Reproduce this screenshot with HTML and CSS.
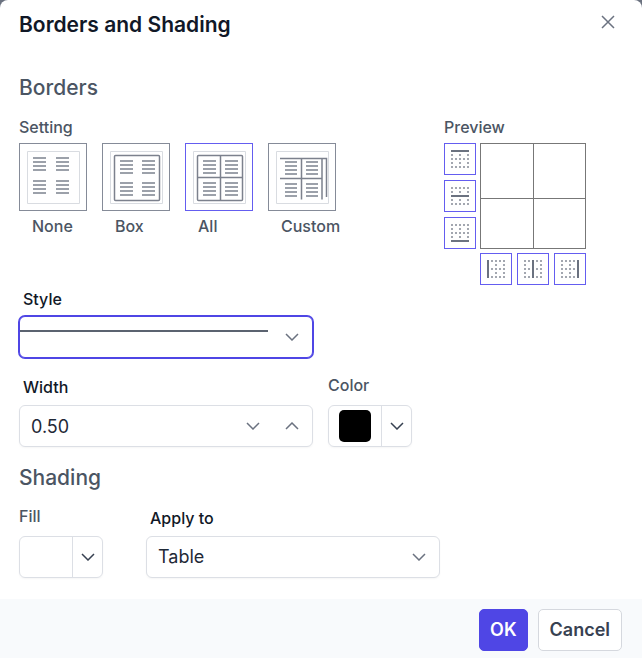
FILE: index.html
```html
<!DOCTYPE html>
<html lang="en">
<head>
<meta charset="utf-8">
<meta name="viewport" content="width=device-width, initial-scale=1">
<title>Borders and Shading</title>
<link rel="stylesheet" href="styles.css">
</head>
<body>
<svg class="defs" aria-hidden="true">
  <defs>
    <g id="lines"><path d="M0 1h13M0 5h13M0 9h13M0 13h13"/></g>
    <g id="lines-narrow"><path d="M0 1h12M0 5h12M0 9h12M0 13h12"/></g>
    <path id="page" class="page" d="M.5.5h52v52H.5z"/>
    <path id="row-full" d="M0 0h2M4 0h2M8 0h2M12 0h2M16 0h2"/>
    <path id="row-sparse" d="M0 0h2M8 0h2M16 0h2"/>
    <g id="dots">
      <use href="#row-full" y="1"/><use href="#row-sparse" y="5"/><use href="#row-full" y="9"/><use href="#row-sparse" y="13"/><use href="#row-full" y="17"/>
    </g>
    <path id="down" d="M1 1l6 6 6-6"/>
    <path id="up" d="M1 7l6-6 6 6"/>
  </defs>
</svg>
<form class="dialog">
  <header class="header">
    <h1 class="title">Borders and Shading</h1>
    <button class="close" type="button" aria-label="Close"><svg width="14" height="14" viewBox="0 0 14 14"><path d="M1 1l12 12M13 1L1 13"/></svg></button>
  </header>
  <main class="content">
    <h2 class="heading">Borders</h2>
    <div class="borders">
      <section class="settings">
        <h3 class="label">Setting</h3>
        <div class="options">
          <div class="option">
            <button class="tile" type="button" aria-labelledby="o-none"><svg width="53" height="53" viewBox="0 0 53 53"><use href="#page"/><g class="text"><use href="#lines" x="6" y="6"/><use href="#lines" x="29" y="6"/><use href="#lines" x="6" y="29"/><use href="#lines" x="29" y="29"/></g></svg></button>
            <span class="caption" id="o-none">None</span>
          </div>
          <div class="option">
            <button class="tile" type="button" aria-labelledby="o-box"><svg width="53" height="53" viewBox="0 0 53 53"><use href="#page"/><rect class="rule" x="4.5" y="4.5" width="45" height="45" rx="1"/><g class="text"><use href="#lines" x="10" y="9"/><use href="#lines" x="32" y="9"/><use href="#lines" x="10" y="31"/><use href="#lines" x="32" y="31"/></g></svg></button>
            <span class="caption" id="o-box">Box</span>
          </div>
          <div class="option">
            <button class="tile tile-on" type="button" aria-labelledby="o-all"><svg width="53" height="53" viewBox="0 0 53 53"><use href="#page"/><rect class="rule" x="4.5" y="4.5" width="45" height="45" rx="1"/><path class="rule" d="M27.5 4.5v45M4.5 26.5h45"/><g class="text"><use href="#lines" x="10" y="9"/><use href="#lines" x="32" y="9"/><use href="#lines" x="10" y="31"/><use href="#lines" x="32" y="31"/></g></svg></button>
            <span class="caption" id="o-all">All</span>
          </div>
          <div class="option">
            <button class="tile" type="button" aria-labelledby="o-custom"><svg width="53" height="53" viewBox="0 0 53 53"><use href="#page"/><path class="rule" d="M4 7.5h46.500V46M4 27.500h42M25.500 7.500v41M46 7.500v41"/><g class="text"><use href="#lines-narrow" x="9" y="10"/><use href="#lines-narrow" x="30" y="10"/><use href="#lines-narrow" x="9" y="32"/><use href="#lines-narrow" x="30" y="32"/></g></svg></button>
            <span class="caption" id="o-custom">Custom</span>
          </div>
        </div>
      </section>
      <section class="preview">
        <h3 class="label">Preview</h3>
        <div class="preview-grid">
          <div class="edges edges-rows">
            <button class="edge" type="button" aria-label="Top border"><svg width="18" height="18" viewBox="0 0 18 18"><use href="#dots"/><path class="blank" d="M0 1h18"/><path class="bar" d="M0 1h18"/></svg></button>
            <button class="edge" type="button" aria-label="Inside horizontal border"><svg width="18" height="18" viewBox="0 0 18 18"><use href="#dots"/><path class="blank" d="M0 9h18"/><path class="bar" d="M0 9h18"/></svg></button>
            <button class="edge" type="button" aria-label="Bottom border"><svg width="18" height="18" viewBox="0 0 18 18"><use href="#dots"/><path class="blank" d="M0 17h18"/><path class="bar" d="M0 17h18"/></svg></button>
          </div>
          <div class="sample"><span></span><span></span><span></span><span></span></div>
          <div class="edges edges-columns">
            <button class="edge" type="button" aria-label="Left border"><svg width="18" height="18" viewBox="0 0 18 18"><use href="#dots"/><path class="blank" d="M1 0v18"/><path class="bar" d="M1 0v18"/></svg></button>
            <button class="edge" type="button" aria-label="Inside vertical border"><svg width="18" height="18" viewBox="0 0 18 18"><use href="#dots"/><path class="blank" d="M9 0v18"/><path class="bar" d="M9 0v18"/></svg></button>
            <button class="edge" type="button" aria-label="Right border"><svg width="18" height="18" viewBox="0 0 18 18"><use href="#dots"/><path class="blank" d="M17 0v18"/><path class="bar" d="M17 0v18"/></svg></button>
          </div>
        </div>
      </section>
    </div>

    <div class="field style-field">
      <label class="label label-strong" for="style">Style</label>
      <div class="control control-focus">
        <select class="input line-select" id="style"><option aria-label="Single line"></option></select>
        <svg class="arrow" width="14" height="8" viewBox="0 0 14 8"><use href="#down"/></svg>
      </div>
    </div>

    <div class="row">
      <div class="field">
        <label class="label label-strong" for="width">Width</label>
        <div class="control">
          <input class="input" id="width" type="text" value="0.50">
          <button class="step" type="button" aria-label="Decrease width"><svg width="14" height="8" viewBox="0 0 14 8"><use href="#down"/></svg></button>
          <button class="step" type="button" aria-label="Increase width"><svg width="14" height="8" viewBox="0 0 14 8"><use href="#up"/></svg></button>
        </div>
      </div>
      <div class="picker-field">
        <span class="label" id="color-label">Color</span>
        <div class="picker" role="group" aria-labelledby="color-label">
          <button class="swatch" type="button" aria-label="Black"><span class="chip chip-black"></span></button>
          <button class="drop" type="button" aria-label="Choose color"><svg width="14" height="8" viewBox="0 0 14 8"><use href="#down"/></svg></button>
        </div>
      </div>
    </div>

    <h2 class="heading heading-shading">Shading</h2>
    <div class="row row-shading">
      <div class="picker-field">
        <span class="label" id="fill-label">Fill</span>
        <div class="picker" role="group" aria-labelledby="fill-label">
          <button class="swatch" type="button" aria-label="White"><span class="chip"></span></button>
          <button class="drop" type="button" aria-label="Choose fill"><svg width="14" height="8" viewBox="0 0 14 8"><use href="#down"/></svg></button>
        </div>
      </div>
      <div class="field">
        <label class="label label-strong" for="apply">Apply to</label>
        <div class="control">
          <select class="input" id="apply"><option>Table</option></select>
          <svg class="arrow" width="14" height="8" viewBox="0 0 14 8"><use href="#down"/></svg>
        </div>
      </div>
    </div>
  </main>
  <footer class="footer">
    <button class="button button-primary" type="button">OK</button>
    <button class="button" type="button">Cancel</button>
  </footer>
</form>
</body>
</html>
```
FILE: styles.css
```css
* { box-sizing: border-box; }

body {
  margin: 0;
  background: #6b7280;
  color: #4b5563;
  font: 500 16px/20px Inter, "Liberation Sans", sans-serif;
}

button, input, select { font: inherit; color: inherit; margin: 0; }
button { padding: 0; border: 0; background: none; cursor: pointer; }
h1, h2, h3 { margin: 0; font: inherit; }
svg { display: block; fill: none; stroke: #6b7280; stroke-width: 1.5; }
.defs { position: absolute; width: 0; height: 0; }

.dialog {
  display: flex;
  flex-direction: column;
  min-height: 100vh;
  background: #fff;
  border-radius: 8px 8px 0 0;
  overflow: hidden;
}

.header {
  display: flex;
  justify-content: space-between;
  align-items: flex-start;
  padding: 13px 19px 0;
}
.title { font-size: 21px; font-weight: 600; line-height: 24px; color: #111827; }
.close { padding: 2px 8px; }

.content { flex: 1; padding: 37px 19px 21px; }
.heading { font-size: 21px; line-height: 28px; }

.borders {
  display: flex;
  justify-content: space-between;
  gap: 16px;
  margin-top: 15px;
  padding-right: 37px;
}
.label { display: block; white-space: nowrap; }
.label-strong { padding-left: 4px; color: #111827; }

.settings { flex: 0 0 317px; }
.options { display: grid; grid-template-columns: repeat(4, minmax(0, 1fr)); gap: 15px; margin-top: 6px; }
.tile {
  display: grid;
  place-items: center;
  width: 100%;
  height: 68px;
  border: 1px solid #858b98;
}
.tile-on { border-color: #645df0; }
.caption { display: block; padding: 5px 0 0 13px; white-space: nowrap; }
.page { stroke: #d9dce1; stroke-width: 1; }
.rule { stroke: #7c818d; stroke-width: 1.5; }
.text { stroke: #7c828f; stroke-width: 1.5; }

.preview-grid {
  display: grid;
  grid-template-columns: 32px 106px;
  gap: 4px;
  margin-top: 6px;
}
.edges { display: flex; justify-content: space-between; }
.edges-rows { flex-direction: column; }
.edges-columns { grid-column: 2; }
.edge {
  display: grid;
  place-items: center;
  width: 32px;
  height: 32px;
  border: 1px solid #645df0;
}
.edge svg { stroke: #858a96; }
.edge .blank { stroke: #fff; stroke-width: 3; }
.edge .bar { stroke: #6b7280; stroke-width: 2; }
.sample {
  display: grid;
  grid-template: 55fr 49fr / 1fr 1fr;
  gap: 1px;
  padding: 1px;
  height: 106px;
  background: #777;
}
.sample span { background: #fff; }

.field { flex: 0 1 294px; max-width: 294px; }
.style-field { margin-top: 4px; }
.control {
  display: flex;
  align-items: center;
  position: relative;
  height: 42px;
  margin-top: 7px;
  border: 1px solid #dcdfe5;
  border-radius: 6px;
  background: #fff;
  box-shadow: 0 1px 2px #0000000a;
}
.control-focus { border-color: #4f46e5; box-shadow: 0 0 0 1px #4f46e5; }
.input {
  flex: 1;
  min-width: 0;
  height: 100%;
  padding: 0 11px;
  border: 0;
  outline: 0;
  background: transparent;
  appearance: none;
  color: #1f2937;
  font-size: 18px;
  font-weight: 400;
}
.line-select { background: linear-gradient(#5b6370, #5b6370) 0 13px / 248px 2px no-repeat; }
.arrow { position: absolute; right: 13px; pointer-events: none; }
.step { display: grid; place-items: center; width: 39px; height: 100%; }
.step:last-child { width: 40px; }

.row { display: flex; align-items: flex-end; gap: 15px; margin-top: 17px; }
.row .control { margin-top: 8px; }
.row-shading { gap: 43px; margin-top: 14px; }
.heading-shading { margin-top: 17px; }

.picker {
  display: flex;
  width: 84px;
  height: 42px;
  margin-top: 10px;
  border: 1px solid #dcdfe5;
  border-radius: 6px;
  box-shadow: 0 1px 2px #0000000a;
}
.swatch { flex: 1; display: grid; place-items: center; }
.chip { width: 32px; height: 32px; border-radius: 5px; background: #fff; }
.chip-black { background: #000; }
.drop { display: grid; place-items: center; width: 30px; border-left: 1px solid #dcdfe5; }
.drop svg { stroke: #374151; }

.footer {
  display: flex;
  justify-content: flex-end;
  gap: 10px;
  padding: 10px 20px 7px;
  background: #f8fafc;
}
.button {
  height: 42px;
  padding: 0 11px;
  border: 1px solid #d5d8de;
  border-radius: 5px;
  background: #fff;
  color: #374151;
  font-size: 18px;
  font-weight: 600;
}
.button-primary { padding: 0 10px; border-color: #4f46e5; background: #4f46e5; color: #fff; }
```
